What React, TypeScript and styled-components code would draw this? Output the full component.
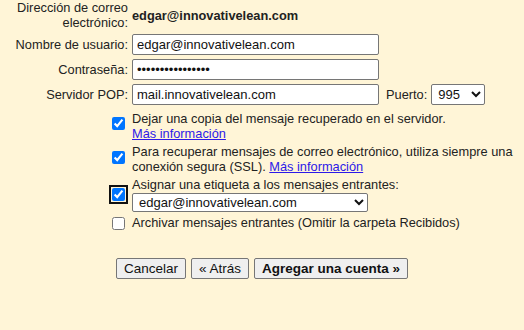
import React from "react";
import styled, { createGlobalStyle } from "styled-components";

const GlobalStyle = createGlobalStyle`
    html, body {
        margin: 0;
        padding: 0;
        background: #fff5d7;
    }

    body {
        font-family: Arial, "Liberation Sans", sans-serif;
        font-size: 12.8px;
        color: #222;
    }
`;

const Page = styled.div`
    width: 524px;
    height: 330px;
    box-sizing: border-box;
    background: #fff5d7;
    display: flex;
    flex-direction: column;
`;

const FormGrid = styled.div`
    display: grid;
    grid-template-columns: 128px 1fr;
    column-gap: 4px;
    row-gap: 4px;
    align-items: center;
`;

const Label = styled.div`
    text-align: right;
    line-height: 15px;
    white-space: nowrap;
`;

const Value = styled.div`
    font-weight: bold;
    line-height: 15px;
    padding-top: 1px;
`;

const Field = styled.div`
    display: flex;
    align-items: center;
    gap: 4px;
`;

const PortLabel = styled.span`
    margin-left: 3px;
`;

const TextInput = styled.input`
    width: 247px;
    height: 21px;
    box-sizing: border-box;
    margin: 0;
    padding: 1px 4px;
    border: 1px solid #767676;
    border-radius: 2px;
    background: #fff;
    font-family: Arial, "Liberation Sans", sans-serif;
    font-size: 13px;
    color: #111;
`;

const Select = styled.select<{ $width: number }>`
    width: ${p => p.$width}px;
    height: ${p => (p.$width > 100 ? 19 : 21)}px;
    box-sizing: border-box;
    margin: 0;
    padding: 0 2px;
    border: 1px solid #767676;
    border-radius: 2px;
    background: #fff;
    font-family: Arial, "Liberation Sans", sans-serif;
    font-size: 13px;
    color: #111;
`;

const OptionList = styled.div`
    display: grid;
    grid-template-columns: 128px 1fr;
    column-gap: 4px;
    row-gap: 2px;
    margin-top: 5px;
    padding-right: 8px;
`;

const BoxCell = styled.div<{ $shift: number }>`
    display: flex;
    justify-content: flex-end;
    align-items: center;
    padding-bottom: ${p => Math.max(p.$shift, 0)}px;
    padding-top: ${p => Math.max(-p.$shift, 0)}px;
`;

const Check = styled.input<{ $focused?: boolean }>`
    width: 13px;
    height: 13px;
    margin: 0 3px 0 0;
    ${p =>
        p.$focused &&
        `
        outline: 2px solid #111;
        outline-offset: 1px;
        border-radius: 3px;
    `}
`;

const OptionText = styled.div`
    line-height: 15px;
    padding-top: 1px;
`;

const Link = styled.a`
    color: #2d19e8;
    text-decoration: underline;
    cursor: pointer;
`;

const LinkLine = styled.div`
    line-height: 15px;
`;

const SelectLine = styled.div`
    margin-top: 1px;
`;

const Buttons = styled.div`
    display: flex;
    justify-content: center;
    gap: 5px;
    margin-top: 28px;
`;

const Button = styled.button<{ $primary?: boolean }>`
    height: 21px;
    box-sizing: border-box;
    margin: 0;
    padding: 1px 7px;
    border: 1px solid #767676;
    border-radius: 2px;
    background: #efefef;
    font-family: Arial, "Liberation Sans", sans-serif;
    font-size: 13.5px;
    font-weight: ${p => (p.$primary ? "bold" : "normal")};
    color: #111;
`;

export default function App() {
    return (
        <Page>
            <GlobalStyle />
            <FormGrid>
                <Label>
                    Dirección de correo
                    <br />
                    electrónico:
                </Label>
                <Value>edgar@innovativelean.com</Value>

                <Label>Nombre de usuario:</Label>
                <Field>
                    <TextInput defaultValue="edgar@innovativelean.com" />
                </Field>

                <Label>Contraseña:</Label>
                <Field>
                    <TextInput type="password" defaultValue="innovativelean12" />
                </Field>

                <Label>Servidor POP:</Label>
                <Field>
                    <TextInput defaultValue="mail.innovativelean.com" />
                    <PortLabel>Puerto:</PortLabel>
                    <Select $width={54} defaultValue="995">
                        <option value="995">995</option>
                        <option value="110">110</option>
                    </Select>
                </Field>
            </FormGrid>

            <OptionList>
                <BoxCell $shift={5}>
                    <Check type="checkbox" defaultChecked />
                </BoxCell>
                <OptionText>
                    Dejar una copia del mensaje recuperado en el servidor.
                    <LinkLine>
                        <Link>Más información</Link>
                    </LinkLine>
                </OptionText>

                <BoxCell $shift={3}>
                    <Check type="checkbox" defaultChecked />
                </BoxCell>
                <OptionText>
                    Para recuperar mensajes de correo electrónico, utiliza siempre una conexión segura (SSL).{" "}
                    <Link>Más información</Link>
                </OptionText>

                <BoxCell $shift={0}>
                    <Check type="checkbox" defaultChecked $focused />
                </BoxCell>
                <OptionText>
                    Asignar una etiqueta a los mensajes entrantes:
                    <SelectLine>
                        <Select $width={236} defaultValue="edgar">
                            <option value="edgar">edgar@innovativelean.com</option>
                        </Select>
                    </SelectLine>
                </OptionText>

                <BoxCell $shift={-3}>
                    <Check type="checkbox" />
                </BoxCell>
                <OptionText>Archivar mensajes entrantes (Omitir la carpeta Recibidos)</OptionText>
            </OptionList>

            <Buttons>
                <Button>Cancelar</Button>
                <Button>« Atrás</Button>
                <Button $primary>Agregar una cuenta »</Button>
            </Buttons>
        </Page>
    );
}
